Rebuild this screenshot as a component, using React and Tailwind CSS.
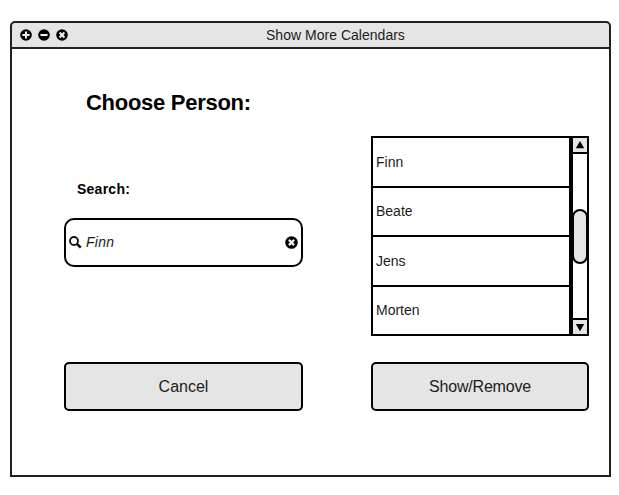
const people = ["Finn", "Beate", "Jens", "Morten"];

function RoundIcon({ size, d }) {
  return (
    <svg width={size} height={size} viewBox="0 0 12 12" className="block shrink-0">
      <circle cx="6" cy="6" r="5.8" fill="#000" />
      <path d={d} stroke="#f0f0f0" strokeWidth="2.1" fill="none" />
    </svg>
  );
}

const CROSS = "M3.6 3.6L8.4 8.4M8.4 3.6L3.6 8.4";

function TitleBar() {
  return (
    <header className="flex h-[28px] items-center rounded-t-[5px] border-2 border-[#231f20] bg-[#e5e5e5]">
      <div className="mb-px flex w-[63px] shrink-0 gap-[6px] pl-[7.5px]">
        <RoundIcon size={12} d="M6 2.4V9.6M2.4 6H9.6" />
        <RoundIcon size={12} d="M2.4 6H9.6" />
        <RoundIcon size={12} d={CROSS} />
      </div>
      <h1 className="flex-1 pl-[191px] text-sm leading-none text-[#1c1c1c] tracking-[0.02px]">Show More Calendars</h1>
    </header>
  );
}

function SearchField() {
  return (
    <div className="mt-[21px] flex h-[49px] items-center rounded-[10px] border-2 border-black pl-[3px] pr-[3px]">
      <svg width="13" height="13" viewBox="0 0 13 13" className="block shrink-0">
        <circle cx="5" cy="5" r="4" fill="none" stroke="#111" strokeWidth="1.8" />
        <path d="M8 8L11.8 11.6" stroke="#111" strokeWidth="2.5" />
      </svg>
      <span className="flex-1 pb-[2px] pl-[4px] text-sm italic leading-none tracking-[0.3px] text-[#1c1c1c]">Finn</span>
      <RoundIcon size={13} d={CROSS} />
    </div>
  );
}

function Button({ children }) {
  return (
    <button className="flex h-[49px] w-full items-center justify-center rounded-[5px] border-2 border-black bg-[#e5e5e5] text-base leading-none text-[#1c1c1c]">
      {children}
    </button>
  );
}

function ScrollBar() {
  return (
    <div className="flex w-[18px] flex-col border-2 border-black">
      <div className="flex h-4 items-center justify-center border-b-2 border-black bg-[#e5e5e5]">
        <svg width="14" height="14" className="block">
          <path d="M7 3L11.2 10.2H2.8Z" />
        </svg>
      </div>
      <div className="-mx-px mt-[55px] h-[55px] rounded-full border-2 border-black bg-[#e5e5e5]" />
      <div className="mt-auto flex h-4 items-center justify-center border-t-2 border-black bg-[#e5e5e5]">
        <svg width="14" height="14" className="block">
          <path d="M7 11.2L11.2 4H2.8Z" />
        </svg>
      </div>
    </div>
  );
}

function PeopleList() {
  return (
    <div className="mt-[87px] flex h-[200px]">
      <ul className="grid w-[200px] grid-rows-[50px_49px_50px_49px] border-2 border-b-0 border-black">
        {people.map((name) => (
          <li
            key={name}
            className="flex items-center border-b-2 border-black pl-[3px] text-sm leading-none text-[#1c1c1c] even:pb-px"
          >
            {name}
          </li>
        ))}
      </ul>
      <ScrollBar />
    </div>
  );
}

export default function App() {
  return (
    <div className="h-[495px] w-[619px] bg-white pl-[10px] pt-[21px] font-['Liberation_Sans',Arial,sans-serif] text-black">
      <div className="flex h-[456px] w-[601px] flex-col">
        <TitleBar />
        <main className="flex flex-1 border-2 border-t-0 border-[#231f20]">
          <section className="ml-[52px] w-[239px]">
            <h2 className="mt-[42px] whitespace-nowrap pl-[22px] text-[22px] font-bold leading-[24px] tracking-[-0.28px]">
              Choose Person:
            </h2>
            <label className="mt-[66px] block pl-[13px] text-sm font-bold leading-4 tracking-[0.25px]">Search:</label>
            <SearchField />
            <div className="mt-[95px]">
              <Button>Cancel</Button>
            </div>
          </section>
          <section className="ml-[68px] w-[218px]">
            <PeopleList />
            <div className="mt-[26px]">
              <Button>
                <span className="tracking-[-0.2px]">Show/Remove</span>
              </Button>
            </div>
          </section>
        </main>
      </div>
    </div>
  );
}
